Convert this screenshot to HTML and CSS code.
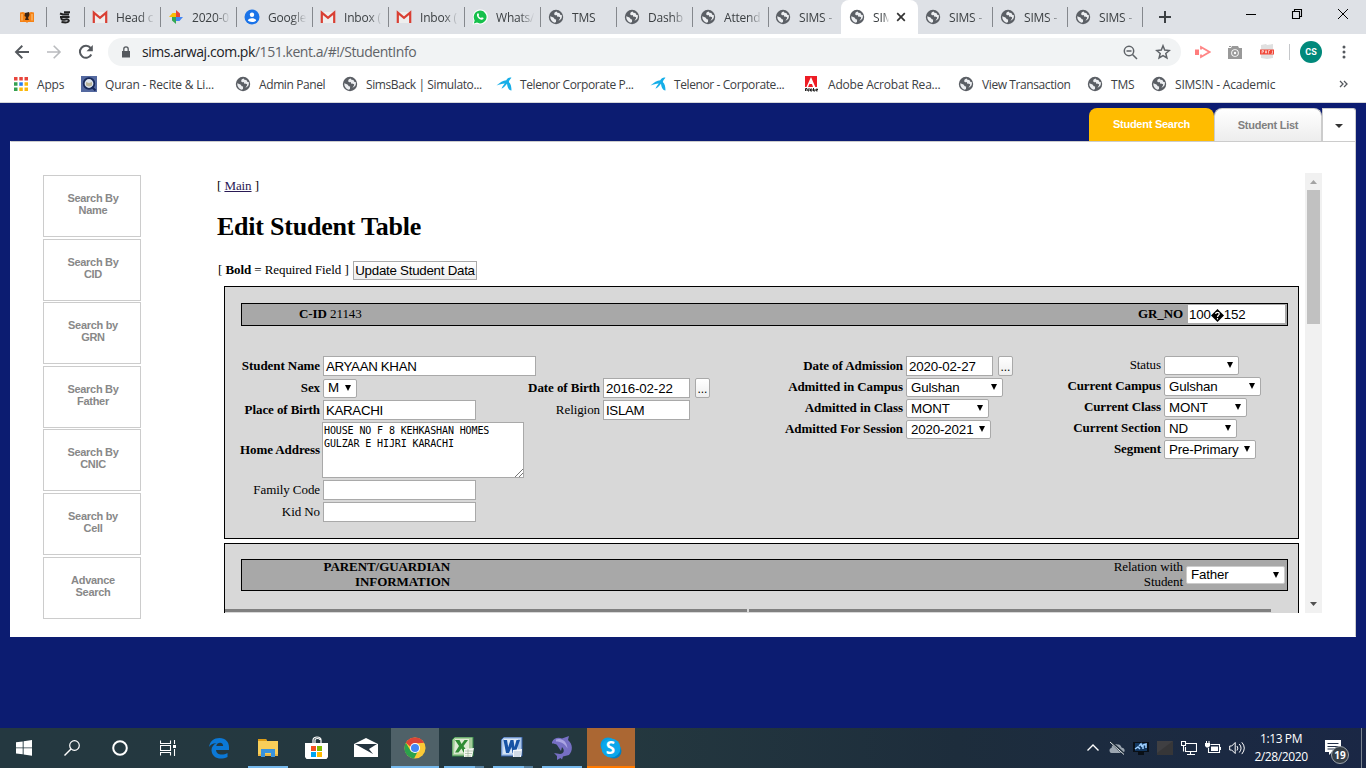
FILE: index.html
```html
<!DOCTYPE html>
<html lang="en">
<head>
<meta charset="utf-8">
<title>SIMS - StudentInfo</title>
<link rel="stylesheet" href="styles.css">
</head>
<body>
<svg class="defs" aria-hidden="true">
<symbol id="globe" viewBox="0 0 16 16"><circle cx="8" cy="8" r="7.2" fill="#5b5f65"/><path d="M8.6 2.600C6.800 3 6 4.200 6.300 5.400c.3.9 1.500.8 2.400.7l.4 1.500c1 .6 2.400 0 2.900.7.500.9-.5 2-1.600 3.500 2.300-.7 3.500-2.200 3.500-4.200V6.300l-1.600-.5-.9-1.900-1.900-.2zM2.200 7.200l3.300 1.300 1.300 1.700 1.300.3-.1 2.600-1.200.6C4.200 13 2.100 10.700 2.200 7.200z" fill="#eceef1"/></symbol>
<symbol id="gmail" viewBox="0 0 16 16"><path d="M2 3h12v11H2z" fill="#eee"/><path d="M1.800 14V3.600L8 8.800l6.200-5.200V14" fill="none" stroke="#d93f33" stroke-width="2.200"/></symbol>
<symbol id="telenor" viewBox="0 0 16 16"><path d="M.5 9.500C4 6.500 7 4.200 10.300 4.200 11.500 2 13.700 1 15.500 1.800 14.300 3.200 13.200 4.500 12.800 6c2 1.500 2.700 5 2.700 8.500-2.700-.2-4-3-4.500-6.800C10 9 8.700 11 5.500 12.800c.7-2 2-3.800 3.300-5.300C6 7.500 3.500 8.700.5 9.500z" fill="#16aee8"/></symbol>
</svg>

<header class="browser">
  <div class="tabs">
    <div class="tab mini first"><svg viewBox="0 0 16 16"><path d="M1 3.500l3-.5 4 1.500L12 3l3 .5V13H9l-1 1-1-1H1z" fill="#f58216"/><path d="M6 4l4-1 .5 3L9 9l1 2H6l1-3-1.500-1z" fill="#3c2413"/><path d="M3 5v6.500M13 5v6.500" stroke="#ffcb84"/></svg></div>
    <div class="tab mini second"><svg viewBox="0 0 16 16"><path d="M7 3.200h6M5 5.500h7M3 4.500l3 1M3 8h9.500M5 8c-2 3 1 3 3.500 2.500s4 .5 3 2-4 1-7 .5" fill="none" stroke="#222" stroke-width="2"/></svg></div>
    <div class="tab"><svg><use href="#gmail"/></svg><span>Head c</span></div>
    <div class="tab"><svg viewBox="0 0 16 16"><path d="M8 8V1l4 3.500V8z" fill="#e94435"/><path d="M8 8h7l-3.500 4H8z" fill="#4285f4"/><path d="M8 8v7l-4-3.500V8z" fill="#34a853"/><path d="M8 8H1l3.500-4H8z" fill="#fbbc05"/></svg><span>2020-0</span></div>
    <div class="tab"><svg viewBox="0 0 16 16"><circle cx="8" cy="8" r="7.500" fill="#1a73e8"/><circle cx="8" cy="5.700" r="2.200" fill="#fff"/><path d="M3.800 11.500c1-3 7.400-3 8.400 0-1.500 1.900-6.900 1.900-8.400 0z" fill="#fff"/></svg><span>Google</span></div>
    <div class="tab"><svg><use href="#gmail"/></svg><span>Inbox (</span></div>
    <div class="tab"><svg><use href="#gmail"/></svg><span>Inbox (</span></div>
    <div class="tab"><svg viewBox="0 0 16 16"><path d="M.5 15.500l1.200-4A7.500 7.500 0 1 1 5 14.700z" fill="#fff"/><path d="M1.800 14.400l.9-3A6.400 6.400 0 1 1 5 13.600z" fill="#16c04c"/><path d="M5.300 4.500l1.100-.2.700 1.700-.6.900c.6 1.100 1.500 1.800 2.500 2.200l.9-.9 1.700.9c0 1.500-1.500 2-2.800 1.500C6.500 9.800 4 7 5.300 4.500z" fill="#fff"/></svg><span>Whats/</span></div>
    <div class="tab"><svg><use href="#globe"/></svg><span>TMS</span></div>
    <div class="tab"><svg><use href="#globe"/></svg><span>Dashb</span></div>
    <div class="tab"><svg><use href="#globe"/></svg><span>Attend</span></div>
    <div class="tab last-before"><svg><use href="#globe"/></svg><span>SIMS -</span></div>
    <div class="tab active"><svg><use href="#globe"/></svg><span>SIM</span><svg class="close" viewBox="0 0 10 10"><path d="M1.200 1.200l7.600 7.600M8.800 1.200L1.200 8.800" stroke="#333" stroke-width="1.700"/></svg></div>
    <div class="tab narrow"><svg><use href="#globe"/></svg><span>SIMS -</span></div>
    <div class="tab"><svg><use href="#globe"/></svg><span>SIMS -</span></div>
    <div class="tab"><svg><use href="#globe"/></svg><span>SIMS -</span></div>
    <svg class="plus" viewBox="0 0 14 14"><path d="M7 1v12M1 7h12" stroke="#3c4043" stroke-width="2"/></svg>
    <div class="window-buttons">
      <svg viewBox="0 0 12 12"><path d="M1 6.500h10" stroke="#000"/></svg>
      <svg viewBox="0 0 12 12"><path d="M1.500 3.500h7v7h-7zM3.500 3.500v-2h7v7h-2" fill="none" stroke="#000" stroke-width="1.100"/></svg>
      <svg viewBox="0 0 12 12"><path d="M1 1l10 10M11 1L1 11" stroke="#000"/></svg>
    </div>
  </div>
  <div class="toolbar">
    <svg class="nav" viewBox="0 0 16 16"><path d="M15 8H2.500M8.300 1.800L2 8l6.300 6.200" fill="none" stroke="#55595e" stroke-width="1.900"/></svg>
    <svg class="nav" viewBox="0 0 16 16"><path d="M1 8h12.500M7.700 1.800L14 8l-6.300 6.200" fill="none" stroke="#b9bbbe" stroke-width="1.600"/></svg>
    <svg class="nav" viewBox="0 0 16 16"><path d="M13.300 10.500A6 6 0 1 1 12.600 4" fill="none" stroke="#55595e" stroke-width="2"/><path d="M14.800 1v6.300H8.500z" fill="#55595e"/></svg>
    <div class="omnibox">
      <svg class="lock" viewBox="0 0 10 12"><path d="M1 5h8v6.500H1z" fill="#55595e"/><path d="M2.800 5V3a2.200 2.200 0 0 1 4.400 0v2" fill="none" stroke="#55595e" stroke-width="1.300"/></svg>
      <span class="url"><b>sims.arwaj.com.pk</b>/151.kent.a/#!/StudentInfo</span>
      <svg class="zoom" viewBox="0 0 15 15"><circle cx="6" cy="6" r="4.700" fill="none" stroke="#5f6368" stroke-width="1.500"/><path d="M9.500 9.500l4.500 4.500M3.500 6h5" stroke="#5f6368" stroke-width="1.500"/></svg>
      <svg class="star" viewBox="0 0 16 16"><path d="M8 1.800l1.700 4.300 4.600.4-3.500 3 1.100 4.500L8 11.600 4.100 14l1.100-4.500-3.500-3 4.600-.4z" fill="none" stroke="#5f6368" stroke-width="1.500"/></svg>
    </div>
    <svg class="ext" viewBox="0 0 16 16"><path d="M0 5.500h4v5.500H0z" fill="#ff7d7d"/><path d="M6 5.500V3l8.500 5L6 13v-2.500" fill="none" stroke="#ff8585" stroke-width="1.800"/></svg>
    <svg class="ext" viewBox="0 0 16 16"><path d="M1 4h3l1-2h6l1 2h3v11H1z" fill="#999"/><circle cx="8" cy="9" r="3.800" fill="#fff"/><circle cx="8" cy="9" r="2.900" fill="#999"/><circle cx="8" cy="9" r="1.200" fill="#fff"/><path d="M2 2h2v1H2z" fill="#999"/></svg>
    <svg class="ext" viewBox="0 0 16 16"><path d="M2 1l5-1 1 1 6-1v14l-6 1-6-1z" fill="#e0e0e0"/><path d="M1 5.500h14v5H1z" fill="#f04738"/><path d="M3 9.500v-3h1.500v1.500H3M6.500 6.500v2.500h1v-2.500M9.500 9.500v-3H11M12.500 9.500h1v-3" fill="none" stroke="#fff" stroke-width=".6"/></svg>
    <i class="divider"></i>
    <span class="avatar">CS</span>
    <svg class="menu" viewBox="0 0 4 14"><circle cx="2" cy="2" r="1.500" fill="#55595e"/><circle cx="2" cy="7" r="1.500" fill="#55595e"/><circle cx="2" cy="12" r="1.500" fill="#55595e"/></svg>
  </div>
  <nav class="bookmarks">
    <a class="b-apps"><svg viewBox="0 0 16 16"><path d="M1 1h3.500v3.500H1zM6.300 1h3.500v3.500H6.300zM11.500 1H15v3.500h-3.500z" fill="#e8453c"/><path d="M1 6.300h3.500v3.500H1zM1 11.500h3.500V15H1z" fill="#34a050"/><path d="M6.300 6.300h3.500v3.500H6.300z" fill="#277df0"/><path d="M11.500 6.300H15v3.500h-3.500zM6.300 11.500h3.500V15H6.300zM11.500 11.500H15V15h-3.500z" fill="#fbb80a"/></svg><span>Apps</span></a>
    <a class="b-quran"><svg viewBox="0 0 16 16"><path d="M0 0h16v16H0z" fill="#5469a0"/><circle cx="8" cy="7.500" r="5.300" fill="#dce4ed" stroke="#17295a" stroke-width="1.800"/><path d="M5 6l3 1 3-1v3.500l-3 1-3-1z" fill="#b9b49a"/><path d="M11 11l3.500 3.500" stroke="#17295a" stroke-width="2"/></svg><span>Quran - Recite &amp; Li...</span></a>
    <a class="b-admin tight"><svg><use href="#globe"/></svg><span>Admin Panel</span></a>
    <a class="b-sims tight"><svg><use href="#globe"/></svg><span>SimsBack | Simulato...</span></a>
    <a class="b-tel1 tight"><svg><use href="#telenor"/></svg><span>Telenor Corporate P...</span></a>
    <a class="b-tel2 tight"><svg><use href="#telenor"/></svg><span>Telenor - Corporate...</span></a>
    <a class="b-adobe"><svg viewBox="0 0 16 16"><path d="M1 0h12v11H1z" fill="#ed1c24"/><path d="M7 1l4.300 10H9L8 8H5.500L7 4.500 4 11H2.500z" fill="#fff"/><path d="M1.500 15v-2.500h1.500V15M5 12v3H4v-2M6.500 13v2H8v-2zM9.500 12v3H11v-2M12.300 14h1.200v-1h-1.200v2h1.200" fill="none" stroke="#222"/></svg><span>Adobe Acrobat Rea...</span></a>
    <a class="b-view tight"><svg><use href="#globe"/></svg><span>View Transaction</span></a>
    <a class="b-tms"><svg><use href="#globe"/></svg><span>TMS</span></a>
    <a class="b-academic"><svg><use href="#globe"/></svg><span>SIMS!N - Academic</span></a>
    <svg class="more" viewBox="0 0 9 8"><path d="M1 1l3 3-3 3M5 1l3 3-3 3" fill="none" stroke="#55595e" stroke-width="1.300"/></svg>
  </nav>
</header>

<main class="page">
  <div class="page-tabs">
    <span class="ptab on">Student Search</span>
    <span class="ptab off">Student List</span>
    <span class="ptab drop"><svg viewBox="0 0 8 4"><path d="M0 0h8L4 4z" fill="#333"/></svg></span>
  </div>
  <div class="panel">
    <aside class="sidebar">
      <a>Search By<br>Name</a><a>Search By<br>CID</a><a>Search by<br>GRN</a><a>Search By<br>Father</a><a>Search By<br>CNIC</a><a>Search by<br>Cell</a><a>Advance<br>Search</a>
    </aside>
    <section class="frame">
      <div class="content">
        <p class="crumb">[ <a>Main</a> ]</p>
        <h1>Edit Student Table</h1>
        <div class="actions"><span>[ <b>Bold</b> = Required Field ]</span><span class="update">Update Student Data</span></div>
        <div class="box student">
          <div class="bar">
            <span class="cid"><b>C-ID</b> 21143</span>
            <b class="gr">GR_NO</b><span class="input gr-input">100<svg viewBox="0 0 13 13"><path d="M6.500 0L13 6.500 6.500 13 0 6.500z" fill="#000"/><path d="M4.700 5c0-2.300 3.600-2.300 3.600 0 0 1.300-1.800 1.200-1.800 3M6.500 9v1.400" fill="none" stroke="#fff" stroke-width="1.200"/></svg>152</span>
          </div>
          <div class="fields">
            <div class="col col-a">
              <div class="row"><label class="req">Student Name</label><span class="input w213 caps">ARYAAN KHAN</span></div>
              <div class="row"><label class="req">Sex</label><span class="select w34">M<i></i></span></div>
              <div class="row"><label class="req">Place of Birth</label><span class="input w153 caps">KARACHI</span></div>
              <div class="row tall"><label class="req">Home Address</label><div class="textarea">HOUSE NO F 8 KEHKASHAN HOMES<br>GULZAR E HIJRI KARACHI<svg viewBox="0 0 9 9"><path d="M1 9l8-8M5 9l4-4" stroke="#666" stroke-width=".9"/></svg></div></div>
              <div class="row"><label>Family Code</label><span class="input w153"></span></div>
              <div class="row"><label>Kid No</label><span class="input w153"></span></div>
            </div>
            <div class="col col-b">
              <div class="row"><label class="req">Date of Birth</label><span class="input w87">2016-02-22</span><span class="pick">...</span></div>
              <div class="row"><label>Religion</label><span class="input w87 caps">ISLAM</span></div>
            </div>
            <div class="col col-c">
              <div class="row"><label class="req">Date of Admission</label><span class="input w87">2020-02-27</span><span class="pick">...</span></div>
              <div class="row short"><label class="req">Admitted in Campus</label><span class="select w97">Gulshan<i></i></span></div>
              <div class="row short"><label class="req">Admitted in Class</label><span class="select w83">MONT<i></i></span></div>
              <div class="row short"><label class="req">Admitted For Session</label><span class="select w85">2020-2021<i></i></span></div>
            </div>
            <div class="col col-d">
              <div class="row short"><label>Status</label><span class="select w75"><i></i></span></div>
              <div class="row short"><label class="req">Current Campus</label><span class="select w97">Gulshan<i></i></span></div>
              <div class="row short"><label class="req">Current Class</label><span class="select w83">MONT<i></i></span></div>
              <div class="row short"><label class="req">Current Section</label><span class="select w73">ND<i></i></span></div>
              <div class="row short"><label class="req">Segment</label><span class="select w92">Pre-Primary<i></i></span></div>
            </div>
          </div>
        </div>
        <div class="box parent">
          <div class="bar">
            <b class="ptitle">PARENT/GUARDIAN<br>INFORMATION</b>
            <span class="relation">Relation with<br>Student</span><span class="select relation-select">Father<i></i></span>
          </div>
          <div class="rules"><i></i><i></i></div>
        </div>
      </div>
      <div class="scroll">
        <svg viewBox="0 0 17 17"><path d="M5 11l3.500-4 3.500 4z" fill="#a3a3a3"/></svg>
        <i class="thumb"></i>
        <svg class="down" viewBox="0 0 17 17"><path d="M5 6h7l-3.500 4z" fill="#505050"/></svg>
      </div>
    </section>
  </div>
</main>

<footer class="taskbar">
  <div class="sys"><svg viewBox="0 0 16 16"><path d="M0 2.300l6.700-.9v6H0zM7.600 1.300L16 .1v7.300H7.600zM0 8.300h6.700v6L0 13.500zM7.600 8.300H16v7.400l-8.400-1.200z" fill="#fff"/></svg></div>
  <div class="sys"><svg viewBox="0 0 16 16"><circle cx="10.500" cy="5.500" r="4.800" fill="none" stroke="#fff" stroke-width="1.200"/><path d="M7 9L.5 15.500" stroke="#fff" stroke-width="1.400"/></svg></div>
  <div class="sys"><svg viewBox="0 0 16 16"><circle cx="8" cy="8" r="6.800" fill="none" stroke="#fff" stroke-width="2"/></svg></div>
  <div class="sys tv"><svg viewBox="0 0 16 16"><path d="M.5.500v3h10v-3M.5 15.500v-3h10v3M.5 5.500h10v5H.5zM14.500 0v4M14.500 9v7" fill="none" stroke="#fff" stroke-width="1.100"/><path d="M13 5h3v3h-3z" fill="#fff"/></svg></div>
  <div class="app"><svg viewBox="0 0 22 22"><path d="M1 10C2 4 6 1 11.500 1 17.500 1 21 5 21 10v3H8c.3 5 6.500 5.700 11.500 3v4C12 23.500 4 21 3.500 13.500 3.400 10 5.500 7.500 8.500 6.300 5.500 6 2.500 7.500 1 10zm7.200-1h7c0-4.500-6.200-4.500-7 0z" fill="#0b78d7"/></svg></div>
  <div class="app open"><svg viewBox="0 0 22 22"><path d="M1 2h8l1 2h11v15H1z" fill="#f8ce59"/><path d="M1 2h8l1 2H1z" fill="#dc9c16"/><path d="M1 17h20v2H1z" fill="#e9b545"/><path d="M4 12h14v8h-4v-4H8v4H4z" fill="#3993dc"/></svg></div>
  <div class="app"><svg class="store" viewBox="0 0 24 24"><path d="M8 7V4c0-4 8-4 8 0v3M10 7V4c0-2 5-2 5 0" fill="none" stroke="#fff" stroke-width="1.200"/><path d="M0 7h23v14l-1.500 2h-20L0 21z" fill="#fff"/><path d="M6 10h5v5H6z" fill="#f25022"/><path d="M12 10h5v5h-5z" fill="#7fba00"/><path d="M6 16h5v5H6z" fill="#00a4ef"/><path d="M12 16h5v5h-5z" fill="#ffb900"/></svg></div>
  <div class="app"><svg class="store" viewBox="0 0 24 24"><path d="M0 8l12-6 12 6v13H0z" fill="#fff"/><path d="M1 8h22L15 13l4 5-9-5z" fill="#24343f"/></svg></div>
  <div class="app chrome"><svg viewBox="0 0 24 24"><circle cx="12" cy="12" r="11.500" fill="#fbc936"/><path d="M2 6.300A11.500 11.500 0 0 1 22 6.300L12 7v8z" fill="#dc4437"/><path d="M2 6.300l5.500 9.200 7 1L11 23.500A11.500 11.500 0 0 1 2 6.300z" fill="#2ba24c"/><circle cx="12" cy="12" r="5.500" fill="#fff"/><circle cx="12" cy="12" r="4.400" fill="#4587f3"/></svg></div>
  <div class="app open multi"><svg viewBox="0 0 22 22"><path d="M3 0h18v19H0V3z" fill="#a4cc9a" stroke="#338947"/><path d="M3 2h14v14L2 17z" fill="#dfecd7"/><path d="M3 3h4.500l2 4 3-4H16l-4.500 6L16 15.500h-4.500l-2-4-3 4H3l4-6.500z" fill="#308c35"/><path d="M12 12l10-1-2 9-8 0z" fill="#f5f8f2"/><path d="M13 14h8M13 16.500h7M13 19h6M16 12v8" stroke="#90a98b" stroke-width=".6"/></svg></div>
  <div class="app open multi"><svg viewBox="0 0 22 22"><path d="M3 0h18v19H0V3z" fill="#abc6e9" stroke="#315ca5"/><path d="M3 2h14v14L2 17z" fill="#dbe8f8"/><path d="M2.500 3H6l1.200 7L9.500 3h3l1 7L15.500 3H19l-4.500 13h-3l-1-6-2.500 6H5z" fill="#1753a5"/><path d="M12 13l9-1-1 8-8 0z" fill="#f5f8fb"/><path d="M13 15h7M13 17h7M13 19h6" stroke="#829bbd" stroke-width=".6"/></svg></div>
  <div class="app open"><svg class="dolphin" viewBox="0 0 22 24"><path d="M1 6C3 2 7 1 11 2.500L18 0l-1 4c5 4 5 11 1 15l-6 1.500-1 3L9.500 22 6 24v-4l-3-3 6 1c4 0 5-4 2-7l-1 4-4-6C5 8 3 7.500 1 7.500z" fill="#766fc4"/><path d="M5 3.500c6-2 11 2 11.500 9C14 8 10 5.500 5 5.500z" fill="#aaa4e3"/></svg></div>
  <div class="app skype"><svg viewBox="0 0 22 22"><circle cx="8" cy="8" r="7.500" fill="#069ee2"/><circle cx="14" cy="14" r="7.500" fill="#047fc1"/><circle cx="11" cy="11" r="9.500" fill="#0ba7eb"/></svg><b>S</b></div>
  <div class="tray">
    <svg viewBox="0 0 16 16"><path d="M2.500 10.500L8 5l5.500 5.500" fill="none" stroke="#fff" stroke-width="1.400"/></svg>
    <svg viewBox="0 0 16 16"><path d="M2.500 13C0 12.500-.3 8.500 2.500 8 3 4.500 6 3 8.500 4.500c2.500-.5 3.500 1 4 3 4 .5 4 5 1 5.500z" fill="#9ba5b0"/><path d="M1.500 1.500l13 12" stroke="#1e2d3a" stroke-width="2.400"/><path d="M1 2l14 12.500" stroke="#e4e7ea"/></svg>
    <svg viewBox="0 0 16 16"><path d="M0 2h16v10h-5v3H5v-3H0z" fill="#090f16"/><path d="M2 3h12v8H2z" fill="#123760"/><path d="M2 9l3-2 2 2M6 6l2-2 1 3M10 9V5l3-1v4" fill="none" stroke="#9fd0ff" stroke-width="1.500"/></svg>
    <svg viewBox="0 0 16 16"><path d="M0 1h16v14H0z" fill="#363638"/><path d="M0 1h16L0 13z" fill="#3f3f42"/></svg>
    <svg viewBox="0 0 16 16"><path d="M5 3.500h10.500v8H4.500V7M9.500 12v3M6 14.500h8M.5 1.500h4v4h-4zM2.500 5.500v6" fill="none" stroke="#fff" stroke-width="1.100"/></svg>
    <svg viewBox="0 0 16 16"><path d="M5.500 4.500H14.500V12.500H3.500V8" fill="none" stroke="#fff" stroke-width="1.100"/><path d="M6 6.500h7v4.500H6zM0 3h5v3L3.500 7.500h-2L0 6zM1 1h1v2H1zM3.500 1h1v2h-1zM15 7h1v3h-1z" fill="#fff"/></svg>
    <svg viewBox="0 0 16 16"><path d="M.7 6v4h2l3.500 3.500v-11L2.700 6zM8 6q1.700 2 0 4.500M10.300 4q3.500 4 0 8.500M12.800 2.300q5 5.700 0 11.800" fill="none" stroke="#fff"/></svg>
  </div>
  <div class="clock">1:13 PM<br>2/28/2020</div>
  <div class="notify"><svg viewBox="0 0 16 16"><path d="M0 1h16v12H7l-3 3v-3H0z" fill="#fff"/><path d="M2.500 4.500h11M2.500 7.500h11M2.500 10h7" stroke="#233048"/></svg><span>19</span></div>
  <i class="desk"></i>
</footer>
</body>
</html>
```

FILE: styles.css
```css
* { box-sizing: border-box; }
html, body { margin: 0; height: 768px; overflow: hidden; }
body { display: flex; flex-direction: column; width: 1366px; background: #0c1c71; font-family: "Liberation Sans", Arial, sans-serif; }
svg { display: block; flex: none; }
.defs { display: none; }

/* browser chrome */
.browser { height: 103px; flex: none; background: #fff; border-bottom: 1px solid #d5d6d8; font: 12px "Open Sans", "Noto Sans", sans-serif; color: #3c4043; }
.tabs { display: flex; height: 34px; background: #dee1e6; }
.tab { display: flex; align-items: center; width: 76px; height: 34px; padding-left: 7px; flex: none; position: relative; }
.tab::after { content: ""; position: absolute; right: 0; top: 7px; width: 1px; height: 20px; background: #85888d; }
.tab > svg { width: 16px; height: 16px; }
.tab span { margin-left: 8px; width: 40px; overflow: hidden; white-space: nowrap; letter-spacing: -.2px; -webkit-mask-image: linear-gradient(90deg, #000 60%, transparent 96%); }
.tab.mini { width: 38px; padding-left: 10px; }
.tab.first { width: 47px; padding-left: 19px; }
.tab.last-before { width: 73px; padding-left: 6px; }
.tab.last-before::after, .tab.active::after { display: none; }
.tab.active { width: 77px; background: #fff; border-radius: 8px 8px 0 0; padding-left: 8px; margin-left: -1px; }
.tab.active span { width: 17px; }
.tab.active .close { width: 10px; height: 10px; margin-left: 6px; }
.tab.narrow { width: 75px; padding-left: 7px; }
.tab.narrow ~ .tab { width: 75px; padding-left: 7px; }
.plus { width: 14px; height: 14px; margin: 10px 0 0 15px; }
.window-buttons { display: flex; gap: 34px; margin: 8px 17px 0 auto; }
.window-buttons svg { width: 12px; height: 12px; }
.toolbar { display: flex; align-items: center; height: 36px; padding-left: 14px; }
.nav { width: 16px; height: 16px; margin-right: 16px; }
.omnibox { display: flex; align-items: center; width: 1073px; height: 28px; margin-left: -2px; border-radius: 14px; background: #f1f3f4; padding-left: 13px; }
.lock { width: 10px; height: 12px; }
.url { margin-left: 11px; margin-top: -2px; font-size: 14px; letter-spacing: -.45px; color: #5f6368; }
.url b { font-weight: 400; color: #202124; }
.zoom { width: 15px; height: 15px; margin-left: auto; }
.star { width: 16px; height: 16px; margin: 0 10px 0 17px; }
.ext { width: 16px; height: 16px; margin-left: 14px; margin-right: 2px; }
.divider { width: 1px; height: 16px; background: #c5c7ca; margin-left: 12px; }
.avatar { width: 22px; height: 22px; margin-left: 10px; border-radius: 50%; background: #00897b; color: #fff; font: bold 9px/22px Roboto, sans-serif; text-align: center; }
.menu { width: 4px; height: 14px; margin-left: 20px; }
.bookmarks { display: flex; align-items: center; height: 28px; padding-left: 13px; }
.bookmarks a { display: flex; align-items: center; gap: 8px; white-space: nowrap; flex: none; letter-spacing: -.2px; }
.bookmarks a.tight { letter-spacing: -.4px; }
.bookmarks a svg { width: 16px; height: 16px; }
.b-apps { width: 68px; }
.b-quran { width: 154px; }
.b-admin { width: 107px; }
.b-sims { width: 154px; }
.b-tel1 { width: 154px; }
.b-tel2 { width: 154px; }
.b-adobe { width: 154px; }
.b-view { width: 129px; }
.b-tms { width: 64px; }
.more { width: 9px; height: 8px; margin-left: auto; margin-right: 18px; }

/* application panel */
.page { height: 625px; flex: none; padding: 5px 10px 0; }
.page-tabs { display: flex; justify-content: flex-end; height: 33px; font: bold 11px "Liberation Sans", Arial, sans-serif; letter-spacing: -.26px; }
.ptab { height: 33px; text-align: center; line-height: 32px; border-radius: 8px 8px 0 0; }
.on { width: 125px; background: #ffbc00; color: #fff; }
.off { width: 108px; color: #808080; background: linear-gradient(#fff, #ededed); border: 1px solid #ccc; border-bottom: 0; }
.drop { width: 34px; background: #fff; border: 1px solid #ccc; border-bottom: 0; border-radius: 0 3px 0 0; padding: 15px 0 0 12px; }
.drop svg { width: 8px; height: 4px; }
.panel { display: flex; height: 496px; background: #fff; border: 1px solid #ccc; border-left-color: #fff; border-bottom-color: #fff; padding: 33px 0 0 32px; }
.sidebar { width: 98px; display: flex; flex-direction: column; gap: 1.600px; }
.sidebar a { height: 62px; flex: none; border: 1px solid #ccc; padding: 16px 0 0 2px; text-align: center; font: bold 11px/12px "Liberation Sans", Arial, sans-serif; letter-spacing: -.3px; color: #888; }
.frame { display: flex; width: 1113px; height: 440px; margin: -2px 0 0 68px; overflow: hidden; }
.content { width: 1096px; height: 440px; padding: 5px 6px 0 8px; overflow: hidden; font: 13px/15px "Liberation Serif", "Times New Roman", serif; letter-spacing: -.08px; color: #000; }
.crumb { margin: 0; }
.crumb a { color: #2a1a55; text-decoration: underline; }
.content h1 { margin: 18px 0 0; font-size: 26px; line-height: 32px; letter-spacing: -.22px; }
.actions { display: flex; align-items: center; height: 20px; margin: 17px 0 0 1px; }
.actions > span:first-child { width: 131px; margin: -2px 4px 0 0; white-space: nowrap; }
.update { width: 124px; height: 19px; border: 1px solid #aaa; background: linear-gradient(#fff, #eee); text-align: center; white-space: nowrap; font: 13.330px/18px "Liberation Sans", Arial, sans-serif; letter-spacing: -.26px; }
.box { margin-left: 7px; width: 1075px; border: 1px solid #000; background: #d8d8d8; padding-top: 16px; }
.student { height: 253px; margin-top: 6px; }
.bar { display: flex; align-items: center; width: 1047px; margin-left: 16px; background: #a8a8a8; border: 1px solid #000; }
.student .bar { height: 23px; padding: 0 1px 1px 57px; }
.cid { margin-top: -1px; }
.gr { margin: -1px 4px 0 auto; }
.input, .select { display: flex; align-items: center; flex: none; height: 20px; background: #fff; border: 1px solid #a9a9a9; padding-left: 2px; white-space: nowrap; font: 13.330px/18px "Liberation Sans", Arial, sans-serif; letter-spacing: -.15px; }
.input { padding-top: 1px; }
.caps { letter-spacing: -.35px; }
.select { height: 19px; padding-left: 4px; border-radius: 2px; }
.select i { margin-left: auto; margin-right: 5px; margin-top: -1px; border: solid transparent; border-width: 6px 3.500px 0; border-top-color: #000; }
.gr-input { width: 99px; padding-left: 1px; }
.gr-input svg { width: 13px; height: 13px; margin-top: 2px; }
.fields { display: flex; padding-top: 30px; }
.col { flex: none; }
.row { display: flex; align-items: center; height: 22px; padding-bottom: 2px; }
.row.short { height: 21px; }
.row label { flex: none; text-align: right; margin: -2px 3px 0 0; white-space: nowrap; }
.req { font-weight: bold; }
.tall { height: 58px; }
.col-a { width: 312px; }
.col-a label { width: 95px; }
.col-b { width: 186px; padding-top: 22px; }
.col-b label { width: 63px; display: flex; justify-content: flex-end; }
.col-c { width: 267px; }
.col-c label { width: 180px; }
.col-d label { width: 171px; }
.w213 { width: 213px; } .w34 { width: 34px; } .w153 { width: 153px; } .w87 { width: 87px; } .w97 { width: 97px; } .w83 { width: 83px; } .w85 { width: 85px; } .w75 { width: 75px; } .w73 { width: 73px; } .w92 { width: 92px; }
.pick { width: 15px; height: 20px; flex: none; margin-left: 5px; border: 1px solid #a9a9a9; border-radius: 2px; background: linear-gradient(#fff, #eee); font: 12px/20px "Liberation Sans", sans-serif; text-align: center; }
.textarea { position: relative; width: 202px; height: 56px; flex: none; margin-left: -1px; border: 1px solid #a9a9a9; background: #fff; padding: 1px 1px; font: 10px/13px "DejaVu Sans Mono", monospace; letter-spacing: -.12px; }
.textarea svg { position: absolute; right: 0; bottom: 0; width: 9px; height: 9px; }
.parent { height: 80px; margin-top: 4px; padding-top: 15px; }
.parent .bar { height: 32px; padding-right: 2px; }
.ptitle { width: 208px; margin-top: -2px; text-align: right; }
.relation { margin: -2px 3px 0 auto; text-align: right; }
.relation-select { width: 99px; height: 18px; border-color: #ccc; }
.rules { display: flex; gap: 2px; margin-top: 18px; }
.rules i { width: 522px; height: 3px; background: #808080; }
.scroll { display: flex; flex-direction: column; align-items: center; width: 17px; background: #f1f1f1; }
.scroll svg { width: 17px; height: 17px; }
.thumb { width: 13px; height: 134px; background: #c1c1c1; }
.scroll .down { margin-top: auto; }

/* taskbar */
.taskbar { display: flex; height: 40px; flex: none; background: linear-gradient(90deg, #243840, #24383f 45%, #1d2d3c 70%, #1a2745); color: #fff; }
.sys { display: flex; width: 48px; align-items: center; justify-content: center; }
.sys svg { width: 16px; height: 16px; }
.tv { margin-right: 3px; }
.app { position: relative; display: flex; width: 48px; margin-right: 1px; align-items: center; justify-content: center; flex: none; }
.app svg { width: 22px; height: 22px; }
.multi { padding-right: 2px; padding-bottom: 1px; }
.app svg.store { width: 24px; height: 24px; }
.app svg.dolphin { height: 24px; }
.open::after { content: ""; position: absolute; left: 4px; bottom: 0; width: 40px; height: 2px; background: #76b9ed; }
.multi::after { background: linear-gradient(90deg, #76b9ed 31px, #56809f 31px); }
.chrome { background: #4f6168; border-bottom: 2px solid #76b9ed; padding-top: 2px; }
.skype { background: #ab6733; border-bottom: 2px solid #ff7a00; padding-top: 2px; }
.skype b { position: absolute; left: 0; width: 47px; top: 9px; text-align: center; font: bold 17px/22px "Open Sans", sans-serif; }
.tray { display: flex; align-items: center; gap: 8px; margin-left: auto; }
.tray svg { width: 16px; height: 16px; }
.clock { width: 72px; text-align: center; font: 12px/18px "Open Sans", sans-serif; letter-spacing: -.4px; padding-top: 2px; white-space: nowrap; }
.notify { position: relative; width: 44px; padding: 11px 0 0 8px; }
.notify svg { width: 16px; height: 16px; }
.notify span { position: absolute; left: 14px; top: 18px; width: 18px; height: 18px; border: 1px solid #9ba2a8; border-radius: 50%; background: #353e46; font: bold 10px/16px "Open Sans", sans-serif; text-align: center; }
.desk { width: 5px; border-left: 1px solid #7a8490; }
```
